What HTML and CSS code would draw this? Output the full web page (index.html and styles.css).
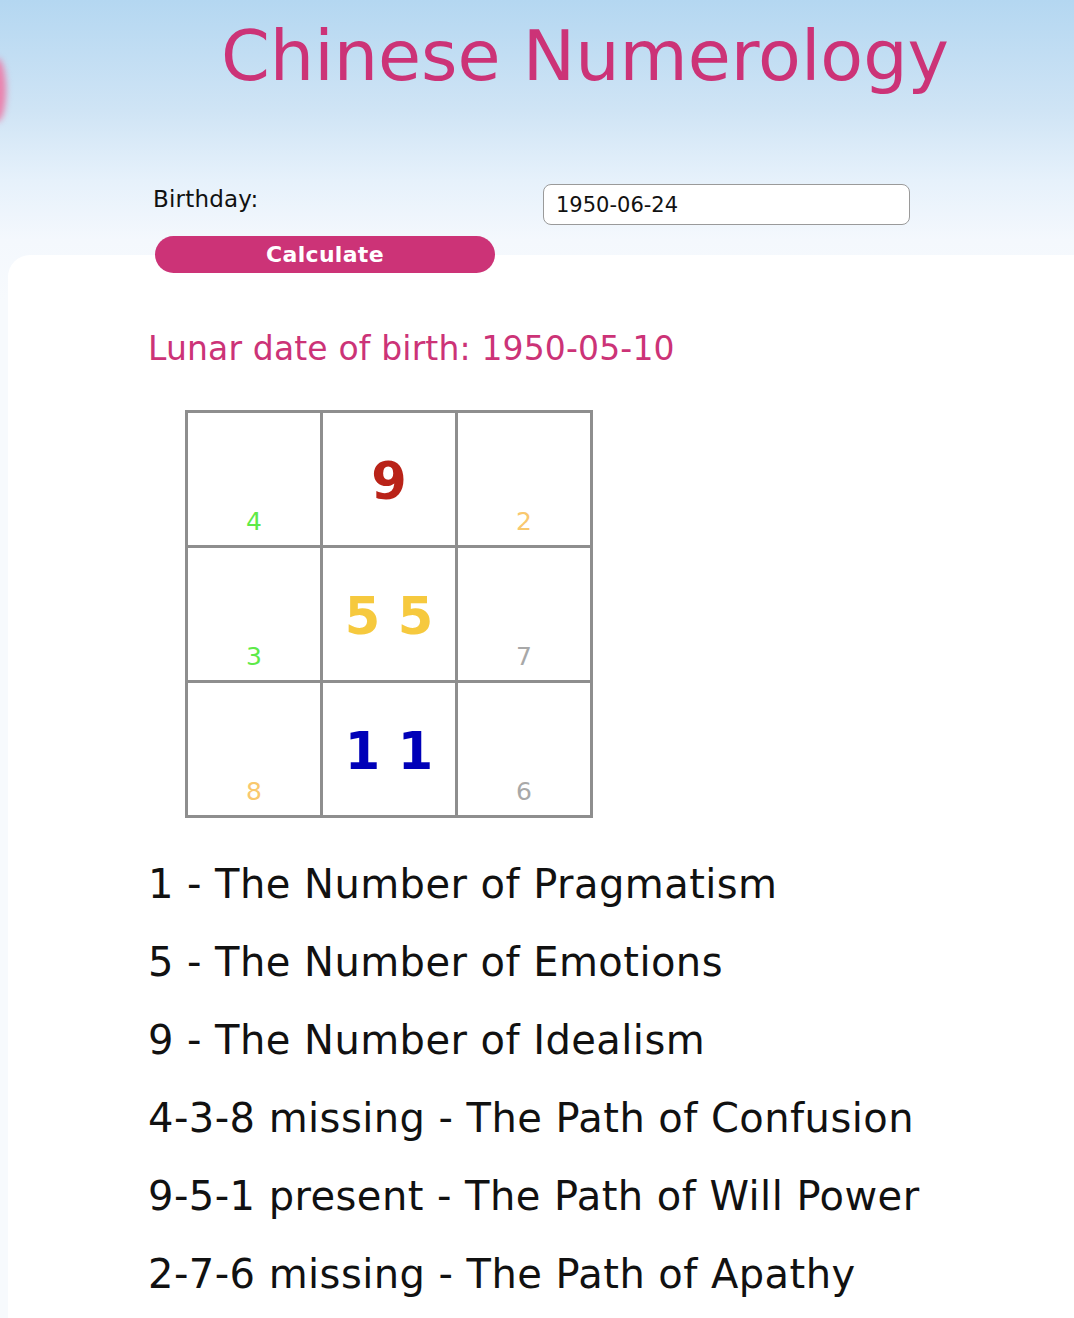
FILE: index.html
```html
<!DOCTYPE html>
<html>
<head>
	<title>Chinese Numerology</title>
	<link rel="stylesheet" href="styles.css">
</head>
<body>
	<div class="blob"></div>
	<h1 class="title">Chinese Numerology</h1>
	<div class="content">
		<form class="birth-form" onsubmit="event.preventDefault()">
			<label for="birthday" class="birth-label">Birthday:</label>
			<input type="text" id="birthday" class="birth-input" value="1950-06-24">
			<button type="submit" class="btn">Calculate</button>
		</form>

		<p class="lunar">Lunar date of birth: 1950-05-10</p>

		<div class="grid">
			<div class="cell"><span class="big">&nbsp;</span><span class="small green">4</span></div>
			<div class="cell"><span class="big red">9</span><span class="small">&nbsp;</span></div>
			<div class="cell"><span class="big">&nbsp;</span><span class="small orange">2</span></div>
			<div class="cell"><span class="big">&nbsp;</span><span class="small green">3</span></div>
			<div class="cell"><span class="big yellow">5 5</span><span class="small">&nbsp;</span></div>
			<div class="cell"><span class="big">&nbsp;</span><span class="small grey">7</span></div>
			<div class="cell"><span class="big">&nbsp;</span><span class="small orange">8</span></div>
			<div class="cell"><span class="big blue">1 1</span><span class="small">&nbsp;</span></div>
			<div class="cell"><span class="big">&nbsp;</span><span class="small grey">6</span></div>
		</div>

		<ul class="results">
			<li>1 - The Number of Pragmatism</li>
			<li>5 - The Number of Emotions</li>
			<li>9 - The Number of Idealism</li>
			<li>4-3-8 missing - The Path of Confusion</li>
			<li>9-5-1 present - The Path of Will Power</li>
			<li>2-7-6 missing - The Path of Apathy</li>
		</ul>
	</div>
</body>
</html>
```

FILE: styles.css
```css
html,
body {
	margin: 0;
}

body {
	position: relative;
	min-height: 100vh;
	font-family: "DejaVu Sans", Verdana, sans-serif;
	color: #111;
	background: linear-gradient(#b4d7f1 0px, #cfe4f5 110px, #e6f1fb 180px, #f4f8fd 240px, #f7fafd 300px);
	background-color: #f7fafd;
	background-repeat: no-repeat;
	overflow: hidden;
}

/* white panel behind the results */
body::before {
	content: "";
	position: absolute;
	top: 255px;
	left: 8px;
	right: 0;
	bottom: 0;
	background-color: #fff;
	border-top-left-radius: 22px;
}

.blob {
	position: absolute;
	top: 58px;
	left: -12px;
	width: 18px;
	height: 64px;
	border-radius: 50%;
	background-color: #ea82ad;
	filter: blur(3px);
}

.title {
	position: relative;
	margin: 15px 0 0;
	padding-left: 96px;
	font-size: 70px;
	font-weight: normal;
	line-height: normal;
	text-align: center;
	color: #cc3377;
}

.content {
	position: relative;
	padding: 0 0 20px 148px;
}

.birth-form {
	display: grid;
	grid-template-columns: 390px 367px;
	row-gap: 11px;
	margin: 87px 0 0 5px;
}

.birth-label {
	padding-top: 2px;
	font-size: 23px;
	line-height: 26px;
	letter-spacing: 0.2px;
}

.birth-input {
	box-sizing: border-box;
	width: 367px;
	height: 41px;
	padding: 0 12px;
	border: 1.5px solid #9a9a9a;
	border-radius: 8px;
	background-color: #fff;
	font-family: inherit;
	font-size: 21px;
	color: #111;
}

.btn {
	grid-column: 1;
	width: 340px;
	height: 37px;
	margin-left: 2px;
	border: none;
	border-radius: 19px;
	background-color: #cc3377;
	color: #fff;
	font-family: inherit;
	font-size: 22px;
	font-weight: bold;
	letter-spacing: 0.3px;
	cursor: pointer;
}

.lunar {
	margin: 56px 0 0;
	font-size: 33px;
	line-height: normal;
	letter-spacing: 0.15px;
	color: #cc3377;
}

.grid {
	display: grid;
	grid-template-columns: repeat(3, 132px);
	grid-auto-rows: 132px;
	gap: 3px;
	width: max-content;
	margin: 42px 0 0 37px;
	padding: 3px;
	background-color: #8e8e8e;
}

.cell {
	display: flex;
	flex-direction: column;
	align-items: center;
	box-sizing: border-box;
	padding: 44px 0 8px;
	background-color: #fff;
}

.big {
	font-size: 51px;
	font-weight: bold;
	line-height: 50px;
	white-space: pre;
}

.small {
	margin-top: auto;
	font-size: 25px;
	line-height: 30px;
}

.red { color: #b92318; }
.yellow { color: #f6c93e; }
.blue { color: #0000b8; }
.green { color: #5eea48; }
.orange { color: #f9c86e; }
.grey { color: #a8a8a8; }

.results {
	list-style: none;
	margin: 27px 0 0;
	padding: 0;
}

.results li {
	font-size: 40px;
	line-height: 78px;
	letter-spacing: 0.45px;
}
```
